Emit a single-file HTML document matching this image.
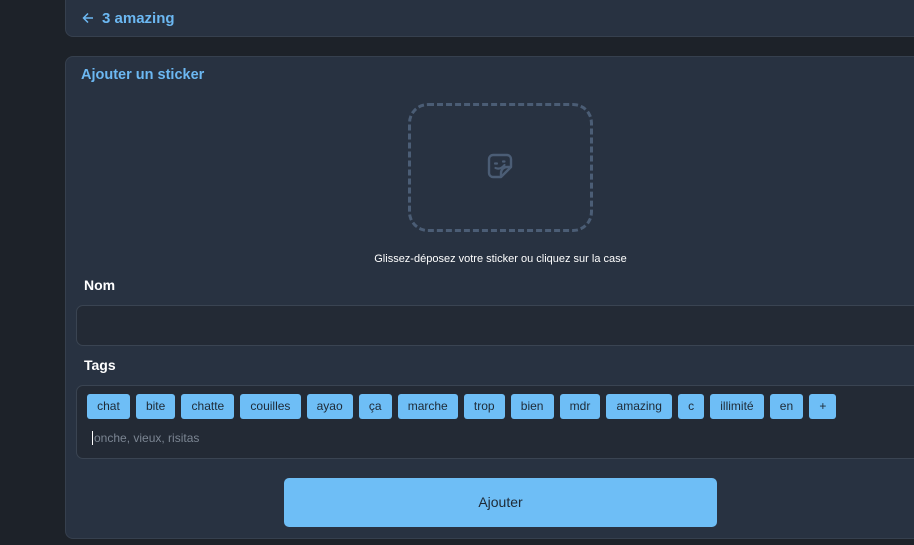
<!DOCTYPE html><html><head><style>
body{margin:0;width:914px;height:545px;background:#1d2229;font-family:"Liberation Sans",sans-serif;overflow:hidden;position:relative}
.card{position:absolute;background:#283241;border:1px solid #36404e;border-radius:8px}
.h{left:65px;top:-10px;width:870px;height:45px}
.h span{position:absolute;left:36px;top:19px;color:#6cb8f2;font-weight:bold;font-size:15px}
.h svg{position:absolute;left:16px;top:21px}
.m{left:65px;top:56px;width:870px;height:481px}
.t{position:absolute;left:15px;top:10px;color:#6cb8f2;font-weight:bold;font-size:14.5px}
.drop{position:absolute;left:342px;top:46px;width:179px;height:123px;border:3px dashed #4b5d75;border-radius:20px}
.cap{position:absolute;left:0;width:869px;top:196px;text-align:center;color:#fff;font-size:11px}
.lab{position:absolute;left:18px;color:#fff;font-weight:bold;font-size:14px}
.in{position:absolute;left:10px;width:870px;background:#232a35;border:1px solid #3a4452;border-radius:7px}
.chips{position:absolute;left:10px;top:8px;display:flex;gap:6px}
.chips span{background:#6ebef6;color:#1e2a36;font-size:12px;height:25px;line-height:25px;padding:0 10.1px;border-radius:3px}
.ph{position:absolute;left:15px;top:45px;color:#7b8592;font-size:12px;border-left:1px solid #fff;padding-left:1px;line-height:14px}
.btn{position:absolute;left:218px;top:421px;width:433px;height:49px;background:#6ebef6;border-radius:5px;text-align:center;line-height:49px;font-size:14px;color:#1e2a36}
</style></head><body>
<div class="card h"><svg width="12" height="12" viewBox="0 0 12 12"><path d="M11 6H1.5M6 1.5L1.5 6L6 10.5" stroke="#6cb8f2" stroke-width="1.5" fill="none"/></svg><span>3 amazing</span></div>
<div class="card m">
<div class="t">Ajouter un sticker</div>
<div class="drop"><svg style="position:absolute;left:74px;top:45px" width="30" height="30" viewBox="0 0 30 30"><path d="M16 26H8a4 4 0 0 1-4-4V8a4 4 0 0 1 4-4h14a4 4 0 0 1 4 4v8z" stroke="#4b5d75" stroke-width="2.4" fill="none" stroke-linejoin="round"/><path d="M16 26v-4a6 6 0 0 1 6-6h4" stroke="#4b5d75" stroke-width="2.4" fill="none"/><path d="M10 12.5h2M18 10.5h1.5M10.5 17q5 2 9-3" stroke="#4b5d75" stroke-width="2.2" fill="none" stroke-linecap="round"/></svg></div>
<div class="cap">Glissez-déposez votre sticker ou cliquez sur la case</div>
<div class="lab" style="top:220px">Nom</div>
<div class="in" style="top:248px;height:39px"></div>
<div class="lab" style="top:300px">Tags</div>
<div class="in" style="top:328px;height:72px"><div class="chips"><span>chat</span><span>bite</span><span>chatte</span><span>couilles</span><span>ayao</span><span>ça</span><span>marche</span><span>trop</span><span>bien</span><span>mdr</span><span>amazing</span><span>c</span><span>illimité</span><span>en</span><span>+</span></div><div class="ph">onche, vieux, risitas</div></div>
<div class="btn">Ajouter</div>
</div>
</body></html>
